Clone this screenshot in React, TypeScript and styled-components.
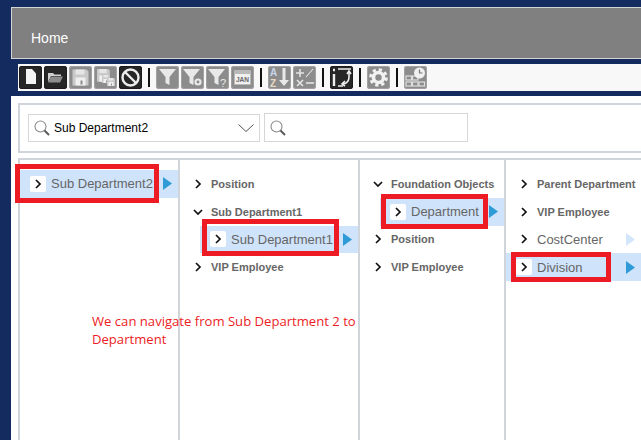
import React from "react";
import styled, { createGlobalStyle } from "styled-components";

const Global = createGlobalStyle`
  html, body { margin: 0; padding: 0; background: #132b5f; }
  #root { width: 641px; height: 440px; overflow: hidden; }
`;

const Page = styled.div`
  width: 641px;
  height: 440px;
  overflow: hidden;
  background: #132b5f;
  box-sizing: border-box;
  padding: 7px 0 0 11px;
  display: flex;
  flex-direction: column;
  font-family: "Liberation Sans", Arial, sans-serif;
`;

const Header = styled.header`
  flex: none;
  height: 52px;
  box-sizing: border-box;
  border: 1px solid #d4d4d4;
  border-right: none;
  background: #808080;
  color: #fff;
  font-size: 14px;
  padding: 22px 0 0 19px;
  line-height: 17px;
`;

const Toolbar = styled.div`
  flex: none;
  height: 27px;
  margin: 5px 0 5px 7px;
  padding: 2px 0 0 1px;
  box-sizing: border-box;
  background: #f8f8f8;
  display: flex;
  align-items: flex-start;
`;

const Tile = styled.div<{ $dark?: boolean }>`
  flex: none;
  width: 23px;
  height: 23px;
  margin-right: 2px;
  border-radius: 3px;
  background: ${(p) => (p.$dark ? "#262626" : "#8c8c8c")};
  box-shadow: inset 0 0 0 1px ${(p) => (p.$dark ? "#1c1c1c" : "#a2a2a2")};
  svg { display: block; }
`;

const Sep = styled.div`
  flex: none;
  width: 2px;
  height: 19px;
  margin: 2px 6px 0 4px;
  background: #111;
`;

const Main = styled.main`
  flex: 1;
  min-height: 0;
  background: #fff;
  padding: 7px 0 0 7px;
  display: flex;
  flex-direction: column;
  gap: 5px;
`;

const SearchPanel = styled.div`
  flex: none;
  height: 50px;
  box-sizing: border-box;
  border: 2px solid #d0d5dc;
  border-right: none;
  padding: 8px 0 0 8px;
  display: flex;
  align-items: flex-start;
  gap: 4px;
`;

const Field = styled.div<{ $w: number; $h: number; $up?: number }>`
  box-sizing: border-box;
  width: ${(p) => p.$w}px;
  height: ${(p) => p.$h}px;
  margin-top: ${(p) => p.$up ?? 0}px;
  border: 1px solid #d6d6d6;
  display: flex;
  align-items: center;
  padding: 0 5px 0 4px;
  gap: 3px;
  font-size: 12px;
  color: #000;
`;

const FieldText = styled.span`
  flex: 1;
`;

const Columns = styled.div`
  flex: 1;
  min-height: 0;
  display: flex;
  border: 2px solid #d0d5dc;
  border-right: none;
  border-bottom: none;
`;

const Column = styled.section<{ $w?: number }>`
  box-sizing: border-box;
  flex: ${(p) => (p.$w ? `0 0 ${p.$w}px` : "1")};
  min-width: 0;
  padding-top: 10px;
  border-right: ${(p) => (p.$w ? "2px solid #d0d5dc" : "none")};
  display: flex;
  flex-direction: column;
`;

const Row = styled.div<{ $selected?: boolean; $nested?: boolean }>`
  position: relative;
  flex: none;
  height: 27.75px;
  box-sizing: border-box;
  margin-left: ${(p) => (p.$nested ? 20 : 0)}px;
  padding: 0 6px 0 10px;
  display: flex;
  align-items: center;
  gap: 5px;
  background: ${(p) => (p.$selected ? "#cfe3fb" : "transparent")};
`;

const Toggle = styled.span<{ $tile?: boolean }>`
  flex: none;
  width: 16px;
  height: 16px;
  border-radius: 2px;
  background: ${(p) => (p.$tile ? "#fff" : "transparent")};
  display: flex;
  align-items: center;
  justify-content: center;
`;

const Label = styled.span<{ $bold?: boolean }>`
  flex: 1;
  min-width: 0;
  white-space: nowrap;
  color: #666;
  font-size: ${(p) => (p.$bold ? "11px" : "13px")};
  font-weight: ${(p) => (p.$bold ? 700 : 400)};
`;

const RedBox = styled.div<{ $l: number; $t: number; $w: number; $h: number }>`
  position: absolute;
  box-sizing: border-box;
  left: ${(p) => p.$l}px;
  top: ${(p) => p.$t}px;
  width: ${(p) => p.$w}px;
  height: ${(p) => p.$h}px;
  border: 5px solid #ed1c24;
  pointer-events: none;
`;

const Note = styled.div`
  position: absolute;
  left: 92px;
  top: 312px;
  width: 272px;
  font-family: "Open Sans", "Noto Sans", sans-serif;
  font-size: 13.1px;
  line-height: 18px;
  color: #ed1c24;
`;

const Chevron = ({ open }: { open?: boolean }) => (
  <svg width="10" height="10" viewBox="0 0 10 10">
    <path
      d={open ? "M1 3l4 4 4-4" : "M3 1l4 4-4 4"}
      fill="none"
      stroke="#111"
      strokeWidth="1.7"
    />
  </svg>
);

const Arrow = ({ faded }: { faded?: boolean }) => (
  <svg width="9" height="13" viewBox="0 0 9 13" style={{ flex: "none" }}>
    <path d="M0 0l9 6.5L0 13z" fill={faded ? "#d3e6fb" : "#2f9bd6"} />
  </svg>
);

const Lens = () => (
  <svg width="18" height="18" viewBox="0 0 18 18" style={{ flex: "none" }}>
    <circle cx="7.5" cy="7.5" r="5.5" fill="none" stroke="#8a8a8a" strokeWidth="1.1" />
    <path d="M11.5 11.5l4.5 4.5" stroke="#555" strokeWidth="1.8" />
  </svg>
);

const Caret = () => (
  <svg width="16" height="8" viewBox="0 0 16 8" style={{ flex: "none" }}>
    <path d="M0.5 0.5L8 7.5 15.5 0.5" fill="none" stroke="#555" strokeWidth="1" />
  </svg>
);

const Icon = ({ children }: { children: React.ReactNode }) => (
  <svg width="23" height="23" viewBox="0 0 23 23">
    {children}
  </svg>
);

const funnel = "M3 3h17l-6.5 8v8l-4-2v-6z";
const W = "#e9e9e9";

const floppy = (x: number, y: number, s: number) => (
  <g transform={`translate(${x} ${y}) scale(${s})`}>
    <path d="M0 0h14l2 2v14H0z" fill="#c9c9c9" />
    <rect x="3" y="0" width="9" height="5" fill="#e6e6e6" />
    <rect x="3" y="8" width="10" height="8" fill="#efefef" />
    <rect x="8" y="11" width="2" height="4" fill="#8c8c8c" />
  </g>
);

type ToolItem = { dark?: boolean; draw: React.ReactNode } | "sep";

const tools: ToolItem[] = [
  { dark: true, draw: <path d="M7 3h6l4 4.5V18H7z" fill="#f4f4f4" /> },
  {
    dark: true,
    draw: (
      <g>
        <path d="M4 7h5l1.5 1.5H17V10H7l-3 6z" fill="#cfcfcf" />
        <path d="M7 10.5h12l-3 6H4z" fill="#8d8d8d" />
      </g>
    ),
  },
  { draw: floppy(3.5, 3.5, 1) },
  {
    draw: (
      <g>
        {floppy(3, 3, 0.8)}
        {floppy(8, 9, 0.5)}
        {floppy(13, 12, 0.5)}
      </g>
    ),
  },
  {
    dark: true,
    draw: (
      <g fill="none" stroke="#ededed" strokeWidth="2.4">
        <circle cx="11.5" cy="11.5" r="8" />
        <path d="M6 6l11 11" />
      </g>
    ),
  },
  "sep",
  { draw: <path d={funnel} fill={W} /> },
  {
    draw: (
      <g>
        <path d={funnel} fill={W} transform="translate(-1 0)" />
        <circle cx="17" cy="16" r="2.5" fill="none" stroke={W} strokeWidth="2.2" />
      </g>
    ),
  },
  {
    draw: (
      <g>
        <path d={funnel} fill={W} transform="translate(-1 0)" />
        <text x="14" y="21" fontSize="11" fontFamily="Liberation Sans" fill={W}>?</text>
      </g>
    ),
  },
  {
    draw: (
      <g>
        <rect x="3" y="4" width="17" height="15" rx="1" fill="#b9b9b9" />
        <rect x="4" y="8" width="15" height="10" fill="#f0f0f0" />
        <text x="11.5" y="15.5" textAnchor="middle" fontSize="6.5" fontWeight="700" fontFamily="Liberation Sans" fill="#666">JAN</text>
      </g>
    ),
  },
  "sep",
  {
    draw: (
      <g fontFamily="Liberation Sans" fontSize="10" fontWeight="700">
        <text x="2" y="10" fill="#c8d6ea">A</text>
        <text x="2" y="21" fill="#e8d9c2">Z</text>
        <path d="M16 2v14" stroke={W} strokeWidth="3" />
        <path d="M11 14h10l-5 6z" fill={W} />
      </g>
    ),
  },
  {
    draw: (
      <g stroke="#e4e4e4" strokeWidth="1.6" fill="none">
        <path d="M3 7h8M7 3v8" />
        <path d="M13 11l7-8" strokeWidth="1.1" />
        <path d="M4 14l6 6M10 14l-6 6" />
        <path d="M13 17h8" />
      </g>
    ),
  },
  "sep",
  {
    dark: true,
    draw: (
      <g fill="none" stroke="#eee" strokeWidth="1.6">
        <path d="M3 4h2M4 8v12" strokeWidth="2.4" />
        <path d="M8 3h13M8 20h5" />
        <path d="M19 5v6q0 6-6 7" />
        <path d="M15 15l-3 3 3 2" />
        <path d="M17 8l2-3 2 3" />
      </g>
    ),
  },
  "sep",
  {
    draw: (
      <g fill="none" stroke="#f2f2f2">
        <circle cx="11.5" cy="11.5" r="5" strokeWidth="3.6" />
        <circle cx="11.5" cy="11.5" r="7.8" strokeWidth="3" strokeDasharray="3.2 2.93" />
      </g>
    ),
  },
  "sep",
  {
    draw: (
      <g>
        <g fill="none" stroke="#dedede" strokeWidth="1.2">
          <rect x="2" y="10" width="5.5" height="4" />
          <rect x="8.5" y="10" width="5.5" height="4" />
          <rect x="2" y="16" width="5.5" height="4" />
          <rect x="8.5" y="16" width="5.5" height="4" />
          <rect x="15" y="16" width="5.5" height="4" />
        </g>
        <circle cx="15.5" cy="7" r="5.5" fill="#f0f0f0" />
        <path d="M15.5 3.5V7h3" fill="none" stroke="#777" strokeWidth="1.2" />
      </g>
    ),
  },
];

type Item = {
  text: string;
  open?: boolean;
  selected?: boolean;
  nested?: boolean;
  plain?: boolean;
  faded?: boolean;
  box?: [number, number, number, number];
};

const cols: { w?: number; items: Item[] }[] = [
  { w: 160, items: [{ text: "Sub Department2", selected: true, box: [-5, -6, 144, 39] }] },
  {
    w: 180,
    items: [
      { text: "Position" },
      { text: "Sub Department1", open: true },
      { text: "Sub Department1", selected: true, nested: true, box: [2, -7, 137, 37] },
      { text: "VIP Employee" },
    ],
  },
  {
    w: 146,
    items: [
      { text: "Foundation Objects", open: true },
      { text: "Department", selected: true, nested: true, box: [1, -4, 107, 35] },
      { text: "Position" },
      { text: "VIP Employee" },
    ],
  },
  {
    items: [
      { text: "Parent Department" },
      { text: "VIP Employee" },
      { text: "CostCenter", plain: true, faded: true },
      { text: "Division", selected: true, box: [5, -1, 100, 30] },
    ],
  },
];

export default function App() {
  return (
    <Page>
      <Global />
      <Header>Home</Header>
      <Toolbar>
        {tools.map((t, i) =>
          t === "sep" ? (
            <Sep key={i} />
          ) : (
            <Tile key={i} $dark={t.dark}>
              <Icon>{t.draw}</Icon>
            </Tile>
          )
        )}
      </Toolbar>
      <Main>
        <SearchPanel>
          <Field $w={232} $h={28} $up={1}>
            <Lens />
            <FieldText>Sub Department2</FieldText>
            <Caret />
          </Field>
          <Field $w={204} $h={29}>
            <Lens />
          </Field>
        </SearchPanel>
        <Columns>
          {cols.map((c, i) => (
            <Column key={i} $w={c.w}>
              {c.items.map((it, j) => (
                <Row key={j} $selected={it.selected} $nested={it.nested}>
                  <Toggle $tile={it.selected}>
                    <Chevron open={it.open} />
                  </Toggle>
                  <Label $bold={!it.selected && !it.plain}>{it.text}</Label>
                  {(it.selected || it.faded) && <Arrow faded={it.faded} />}
                  {it.box && <RedBox $l={it.box[0]} $t={it.box[1]} $w={it.box[2]} $h={it.box[3]} />}
                </Row>
              ))}
            </Column>
          ))}
        </Columns>
      </Main>
      <Note>We can navigate from Sub Department 2 to Department</Note>
    </Page>
  );
}
